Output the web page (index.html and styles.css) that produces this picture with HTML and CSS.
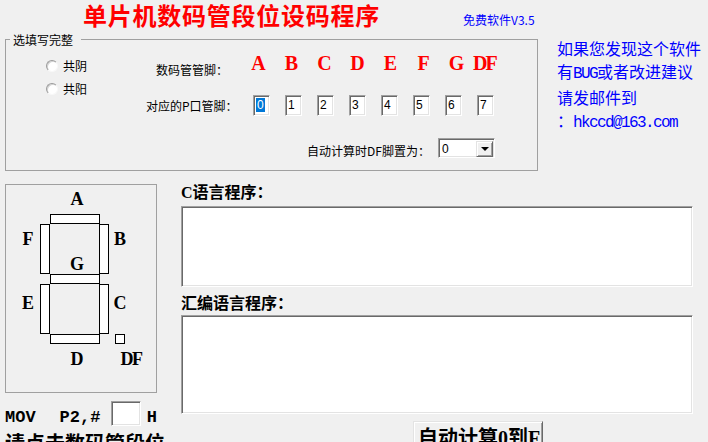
FILE: index.html
```html
<!DOCTYPE html>
<html lang="zh-CN">
<head>
<meta charset="utf-8">
<title>单片机数码管段位设码程序</title>
<link rel="stylesheet" href="styles.css">
</head>
<body>
<div class="window">
  <header class="head">
    <h1 class="title">单片机数码管段位设码程序</h1>
    <span class="version">免费软件V3.5</span>
  </header>

  <section class="upper">
    <div class="group">
      <span class="legend">选填写完整</span>
      <div class="radios">
        <label class="radio"><span class="dot"></span>共阴</label>
        <label class="radio"><span class="dot"></span>共阳</label>
      </div>
      <div class="lbl lbl-seg">数码管管脚：</div>
      <div class="letters">
        <span>A</span><span>B</span><span>C</span><span>D</span><span>E</span><span>F</span><span>G</span><span class="df">DF</span>
      </div>
      <div class="lbl lbl-pin">对应的P口管脚：</div>
      <div class="pins">
        <span class="box"><span class="sel">0</span></span>
        <span class="box">1</span>
        <span class="box">2</span>
        <span class="box">3</span>
        <span class="box">4</span>
        <span class="box">5</span>
        <span class="box">6</span>
        <span class="box">7</span>
      </div>
      <div class="combo-row">
        <span class="lbl combo-lbl">自动计算时DF脚置为：</span>
        <div class="combo">
          <span class="combo-val">0</span>
          <span class="drop"><span class="arrow"></span></span>
        </div>
      </div>
    </div>
    <div class="contact">
      <p>如果您发现这个软件</p>
      <p>有<span class="mono">BUG</span>或者改进建议</p>
      <p>请发邮件到</p>
      <p>：<span class="mono">hkccd@163.com</span></p>
    </div>
  </section>

  <section class="lower">
    <div class="leftcol">
      <div class="seg-panel">
        <span class="seg-label l-a">A</span>
        <span class="seg-label l-f">F</span>
        <span class="seg-label l-b">B</span>
        <span class="seg-label l-g">G</span>
        <span class="seg-label l-e">E</span>
        <span class="seg-label l-c">C</span>
        <span class="seg-label l-d">D</span>
        <span class="seg-label l-df">DF</span>
        <span class="seg seg-a"></span>
        <span class="seg seg-f"></span>
        <span class="seg seg-b"></span>
        <span class="seg seg-g"></span>
        <span class="seg seg-e"></span>
        <span class="seg seg-c"></span>
        <span class="seg seg-d"></span>
        <span class="seg seg-dp"></span>
      </div>
      <div class="mov">
        <span>MOV</span><span class="p2">P2,#</span><span class="hexbox"></span><span class="h">H</span>
      </div>
      <div class="hint">请点击数码管段位</div>
    </div>
    <div class="rightcol">
      <div class="caption"><span class="lat">C</span>语言程序：</div>
      <div class="area a1"></div>
      <div class="caption cap2">汇编语言程序：</div>
      <div class="area a2"></div>
      <button class="calc">自动计算<span class="lat">0</span>到<span class="lat">F</span></button>
    </div>
  </section>
</div>
</body>
</html>
```

FILE: styles.css
```css
html, body {
  margin: 0;
  padding: 0;
}

body {
  background: #f0f0f0;
  font-family: "Noto Sans CJK SC", "Liberation Sans", sans-serif;
  font-size: 12px;
  color: #000;
  width: 708px;
  height: 442px;
  overflow: hidden;
}

/* ---------- header ---------- */
.head {
  display: flex;
  align-items: flex-start;
  height: 39px;
  box-sizing: border-box;
  padding: 2px 0 0 83px;
}

.title {
  margin: 0;
  width: 380px;
  font-size: 24px;
  line-height: 26px;
  font-weight: 700;
  color: #ff0000;
  letter-spacing: 0.75px;
  white-space: nowrap;
}

.version {
  margin-top: 11px;
  font-size: 12px;
  line-height: 14px;
  color: #0000ff;
  white-space: nowrap;
}

/* ---------- upper part ---------- */
.upper {
  display: flex;
  padding-left: 5px;
  height: 132px;
}

.group {
  position: relative;
  flex: none;
  width: 533px;
  height: 132px;
  box-sizing: border-box;
  border: 1px solid #a0a0a0;
  padding: 13px 0 0 40px;
  display: grid;
  grid-template-columns: 100px 82px 1fr;
  grid-template-rows: 23px 21px auto;
  row-gap: 19px;
  align-content: start;
}

.legend {
  position: absolute;
  left: 4px;
  top: -7px;
  padding: 0 8px 0 3px;
  background: #f0f0f0;
  line-height: 14px;
}

.radios {
  grid-column: 1;
  grid-row: 1 / 3;
  display: flex;
  flex-direction: column;
  gap: 11px;
  padding-top: 7px;
}

.radio {
  display: flex;
  align-items: center;
  height: 12px;
  line-height: 12px;
  gap: 5px;
}

.dot {
  width: 12px;
  height: 12px;
  box-sizing: border-box;
  border-radius: 50%;
  background: #fff;
  border: 1px solid;
  border-color: #9a9a9a #f8f8f8 #f8f8f8 #9a9a9a;
  box-shadow: inset 1px 1px 0 #d4d4d4;
}

.lbl {
  line-height: 14px;
  white-space: nowrap;
}

.lbl-seg {
  grid-column: 2;
  grid-row: 1;
  text-align: right;
  margin-top: 10px;
}

.lbl-pin {
  grid-column: 2;
  grid-row: 2;
  text-align: right;
  align-self: center;
}

.letters {
  grid-column: 3;
  grid-row: 1;
  display: flex;
  padding-left: 14px;
  font-family: "Liberation Serif", serif;
  font-weight: 700;
  font-size: 20px;
  line-height: 20px;
  color: #ff0000;
}

.letters span {
  width: 33px;
  text-align: center;
}

.letters .df {
  width: auto;
  text-align: left;
  letter-spacing: -2px;
}

.pins {
  grid-column: 3;
  grid-row: 2;
  display: flex;
  gap: 15px;
  padding-left: 25px;
}

.box,
.hexbox,
.area,
.combo {
  background: #fff;
  border: 1px solid;
  border-color: #a0a0a0 #ffffff #ffffff #a0a0a0;
  box-shadow: inset 1px 1px 0 #696969, inset -1px -1px 0 #e3e3e3;
  box-sizing: border-box;
}

.box {
  width: 17px;
  height: 21px;
  padding: 2px 0 0 2px;
  font-family: "Liberation Sans", sans-serif;
  font-size: 12px;
  line-height: 14px;
}

.sel {
  display: inline-block;
  padding: 0 1px;
  background: #0078d7;
  color: #fff;
}

.combo-row {
  grid-column: 1 / -1;
  grid-row: 3;
  display: flex;
  justify-content: flex-end;
  align-items: flex-end;
  padding-right: 42px;
  margin-top: 3px;
}

.combo-lbl {
  margin-right: 8px;
}

.combo {
  display: flex;
  justify-content: space-between;
  width: 57px;
  height: 20px;
  padding: 1px 1px;
}

.combo-val {
  padding: 1px 0 0 2px;
  font-family: "Liberation Sans", sans-serif;
  font-size: 12px;
  line-height: 16px;
}

.drop {
  display: flex;
  align-items: center;
  justify-content: center;
  width: 17px;
  height: 16px;
  margin-top: 1px;
  box-sizing: border-box;
  background: #f0f0f0;
  border: 1px solid;
  border-color: #e3e3e3 #696969 #696969 #e3e3e3;
  box-shadow: inset 1px 1px 0 #fff, inset -1px -1px 0 #a0a0a0;
}

.arrow {
  width: 0;
  height: 0;
  border-left: 4px solid transparent;
  border-right: 4px solid transparent;
  border-top: 4px solid #000;
}

.contact {
  margin: -2px 0 0 19px;
  color: #0000ff;
  font-size: 16px;
  line-height: 23px;
  white-space: nowrap;
}

.contact p {
  margin: 0;
}

.mono {
  font-family: "Liberation Mono", monospace;
  font-size: 16px;
  letter-spacing: -1.6px;
}

/* ---------- lower part ---------- */
.lower {
  display: flex;
  gap: 24px;
  padding-left: 5px;
  margin-top: 13px;
}

.leftcol {
  flex: none;
  width: 152px;
}

.seg-panel {
  position: relative;
  height: 209px;
  box-sizing: border-box;
  border: 1px solid #a0a0a0;
}

.seg {
  position: absolute;
  box-sizing: border-box;
  background: #fff;
  border: 1px solid #000;
}

.seg-a { left: 44px; top: 29px; width: 50px; height: 10px; }
.seg-f { left: 34px; top: 39px; width: 10px; height: 50px; }
.seg-b { left: 93px; top: 39px; width: 10px; height: 50px; }
.seg-g { left: 44px; top: 89px; width: 50px; height: 10px; }
.seg-e { left: 34px; top: 99px; width: 10px; height: 50px; }
.seg-c { left: 93px; top: 99px; width: 10px; height: 50px; }
.seg-d { left: 44px; top: 149px; width: 50px; height: 10px; }
.seg-dp { left: 109px; top: 149px; width: 10px; height: 10px; }

.seg-label {
  position: absolute;
  width: 30px;
  text-align: center;
  font-family: "Liberation Serif", serif;
  font-weight: 700;
  font-size: 18px;
  line-height: 18px;
}

.l-a { left: 56px; top: 5px; }
.l-f { left: 7px; top: 45px; }
.l-b { left: 99px; top: 45px; }
.l-g { left: 56px; top: 70px; }
.l-e { left: 7px; top: 109px; }
.l-c { left: 99px; top: 109px; }
.l-d { left: 56px; top: 165px; }
.l-df { left: 110px; top: 165px; letter-spacing: -1.5px; }

.mov {
  display: flex;
  align-items: flex-end;
  height: 25px;
  margin-top: 8px;
  font-family: "Liberation Mono", monospace;
  font-weight: 700;
  font-size: 17px;
  line-height: 17px;
  white-space: pre;
}

.mov .p2 {
  margin-left: 24px;
}

.hexbox {
  align-self: stretch;
  width: 30px;
  margin-left: 11px;
}

.mov .h {
  margin-left: 6px;
}

.hint {
  margin-top: 7px;
  font-weight: 700;
  font-size: 20px;
  line-height: 20px;
  white-space: nowrap;
}

.rightcol {
  flex: none;
  width: 512px;
}

.caption {
  font-weight: 700;
  font-size: 16px;
  line-height: 14px;
  white-space: nowrap;
}

.lat {
  font-family: "Liberation Serif", serif;
}

.cap2 {
  margin-top: 8px;
}

.a1 {
  margin-top: 6px;
  height: 81px;
}

.a2 {
  margin-top: 6px;
  height: 99px;
}

.calc {
  display: block;
  margin: 7px 0 0 232px;
  width: 130px;
  padding: 5px 0 4px 4px;
  text-align: left;
  font-family: "Noto Sans CJK SC", sans-serif;
  font-weight: 700;
  font-size: 20px;
  line-height: 20px;
  color: #000;
  background: #f0f0f0;
  border: 1px solid;
  border-color: #e3e3e3 #696969 #696969 #e3e3e3;
  box-shadow: inset 1px 1px 0 #fff, inset -1px -1px 0 #a0a0a0;
  white-space: nowrap;
}
```
